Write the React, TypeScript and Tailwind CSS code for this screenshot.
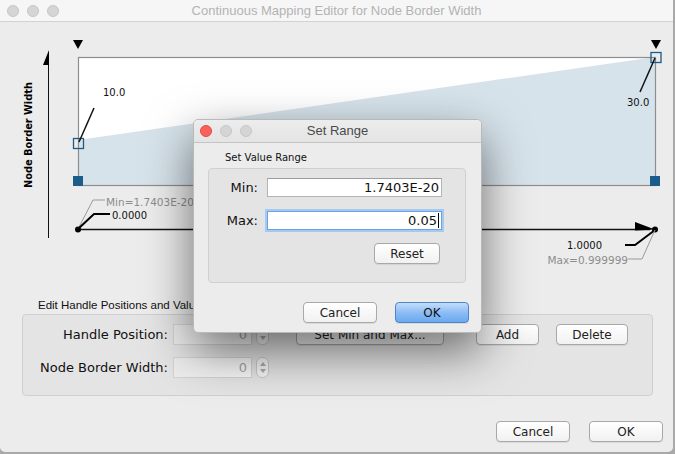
import React from "react";

const dv = "font-['DejaVu_Sans',sans-serif]";
const lib = "font-['Liberation_Sans',Arial,sans-serif]";

function Light({ color }: { color: "gray" | "red" }) {
  return color === "red" ? (
    <div className="w-[12px] h-[12px] rounded-full bg-[#fc605c] border border-[#dd4b47]" />
  ) : (
    <div className="w-[12px] h-[12px] rounded-full bg-[#d5d5d5] border border-[#c6c6c6]" />
  );
}

function Btn({
  w,
  children,
  primary,
}: {
  w: string;
  children: React.ReactNode;
  primary?: boolean;
}) {
  const base = `h-[21px] ${w} rounded-[4px] flex items-center justify-center text-[12px] ${dv}`;
  return primary ? (
    <div className={`${base} border border-[#5282c9] bg-linear-to-b from-[#c3ddfb] via-[#8dbdf4] to-[#69a9f0] text-[#111] shadow-[0_1px_0_rgba(0,0,0,0.08)]`}>
      {children}
    </div>
  ) : (
    <div className={`${base} border border-[#a8a8a8] bg-linear-to-b from-white to-[#f1f1f1] text-[#222] shadow-[0_1px_0_rgba(0,0,0,0.07)]`}>
      {children}
    </div>
  );
}

function Spinner({ up = true }: { up?: boolean }) {
  return (
    <div className="w-[13px] h-[21px] rounded-[6px] border border-[#c9c9c9] bg-[#f4f4f4] flex flex-col items-center justify-center gap-[3px]">
      {up ? (
        <svg width="6" height="4" viewBox="0 0 6 4">
          <polygon points="3,0 6,4 0,4" fill="#a9a9a9" />
        </svg>
      ) : (
        <div className="h-[4px]" />
      )}
      <svg width="6" height="4" viewBox="0 0 6 4">
        <polygon points="0,0 6,0 3,4" fill="#a9a9a9" />
      </svg>
    </div>
  );
}

function Chart() {
  const f = "DejaVu Sans, sans-serif";
  return (
    <svg width="673" height="274" viewBox="0 22 673 274" className="block shrink-0">
      {/* Y axis */}
      <line x1="48.5" y1="52" x2="48.5" y2="238" stroke="#111" strokeWidth="1" />
      <polygon points="49,50 43,65 49,65" fill="#000" />
      <text
        transform="translate(28,135) rotate(-90)"
        textAnchor="middle"
        dominantBaseline="central"
        fontFamily={f}
        fontWeight="bold"
        fontSize="9.8"
        fill="#000"
      >
        Node Border Width
      </text>

      {/* top triangles */}
      <polygon points="73,40 83,40 78,49" fill="#000" />
      <polygon points="651,40 661,40 656,49" fill="#000" />

      {/* plot area */}
      <rect x="78" y="57" width="577" height="128" fill="#fff" />
      <polygon points="78,140 655,57 655,185 78,185" fill="#d7e3eb" />
      <rect x="78.5" y="57.5" width="577" height="128" fill="none" stroke="#8d8d8d" strokeWidth="1.2" />

      {/* handles */}
      <rect x="73.5" y="138.5" width="10" height="10" fill="none" stroke="#1d5a86" strokeWidth="1.3" />
      <rect x="651" y="52.5" width="10" height="10" fill="none" stroke="#1d5a86" strokeWidth="1.3" />
      <rect x="73" y="176" width="10" height="10" fill="#1b5c8a" />
      <rect x="650" y="176" width="10" height="10" fill="#1b5c8a" />

      {/* value labels */}
      <line x1="94" y1="108" x2="79" y2="142" stroke="#111" strokeWidth="1.5" />
      <text x="103" y="95.6" fontFamily={f} fontSize="10" fill="#111">10.0</text>
      <line x1="640" y1="92" x2="655" y2="58" stroke="#111" strokeWidth="1.5" />
      <text x="627" y="105.6" fontFamily={f} fontSize="10" fill="#111">30.0</text>

      {/* X axis */}
      <line x1="78" y1="229.5" x2="650" y2="229.5" stroke="#111" strokeWidth="1.3" />
      <polygon points="635,222 655,229.5 635,230.5" fill="#000" />
      <circle cx="78" cy="229.5" r="3" fill="#000" />
      <circle cx="655" cy="229.5" r="3" fill="#000" />

      {/* left labels */}
      <polyline points="78,229 93,200 105,200" fill="none" stroke="#9a9a9a" strokeWidth="1" />
      <polyline points="78,229 94,214 110,214" fill="none" stroke="#000" strokeWidth="2" />
      <text x="106" y="205.8" fontFamily={f} fontSize="10.5" fill="#8c8c8c">Min=1.7403E-20</text>
      <text x="112" y="218.6" fontFamily={f} fontSize="10" fill="#111">0.0000</text>

      {/* right labels */}
      <polyline points="655,230 635,245 625,245" fill="none" stroke="#000" strokeWidth="2" />
      <polyline points="655,230 642,259 628,259" fill="none" stroke="#9a9a9a" strokeWidth="1" />
      <text x="602" y="248.6" textAnchor="end" fontFamily={f} fontSize="10" fill="#111">1.0000</text>
      <text x="628" y="263.8" textAnchor="end" fontFamily={f} fontSize="10.5" fill="#8c8c8c">Max=0.999999</text>
    </svg>
  );
}

function SetRangeDialog() {
  return (
    <div className="absolute left-[193px] top-[119px] w-[289px] h-[214px] rounded-[5px] bg-[#ececec] border border-[#b9b9b9] shadow-[0_18px_48px_rgba(0,0,0,0.55)] flex flex-col overflow-hidden">
      <div className="h-[23px] shrink-0 bg-linear-to-b from-[#ededed] to-[#e4e4e4] border-b border-[#c4c4c4] grid grid-cols-[1fr_auto_1fr] items-center">
        <div className="flex gap-[8px] pl-[6px]">
          <Light color="red" />
          <Light color="gray" />
          <Light color="gray" />
        </div>
        <div className={`${lib} text-[13px] text-[#4a4a4a]`}>Set Range</div>
        <div />
      </div>
      <div className={`${dv} text-[10px] text-[#111] pl-[31px] mt-[8px] h-[14px] leading-[14px]`}>Set Value Range</div>
      <div className="ml-[14px] mt-[3px] w-[258px] h-[115px] rounded-[4px] border border-[#d0d0d0] bg-[#e4e4e4] flex flex-col pt-[9px]">
        <div className="flex items-center gap-[9px]">
          <div className={`${dv} w-[49px] text-right text-[13px] text-[#111]`}>Min:</div>
          <div className={`${dv} w-[175px] h-[19px] bg-white border border-[#b4b4b4] border-t-[#9d9d9d] text-right text-[13px] leading-[17px] pr-[2px] text-[#111]`}>
            1.7403E-20
          </div>
        </div>
        <div className="flex items-center gap-[9px] mt-[13px]">
          <div className={`${dv} w-[49px] text-right text-[13px] text-[#111]`}>Max:</div>
          <div className={`${dv} w-[175px] h-[19px] bg-white border border-[#6ca2e4] shadow-[0_0_0_2px_#a6c9f2] text-right text-[13px] leading-[17px] pr-[2px] text-[#111] flex justify-end items-center`}>
            <span>0.05</span>
            <span className="w-[1px] h-[15px] bg-black ml-[1px]" />
          </div>
        </div>
        <div className="mt-[13px] ml-[165px]">
          <Btn w="w-[66px]">Reset</Btn>
        </div>
      </div>
      <div className="flex justify-end gap-[18px] pr-[12px] mt-[19px]">
        <Btn w="w-[74px]">Cancel</Btn>
        <Btn w="w-[74px]" primary>
          OK
        </Btn>
      </div>
    </div>
  );
}

export default function App() {
  return (
    <div className="w-[675px] h-[454px] bg-[#a9a9a9] overflow-hidden">
      <div className="relative w-[673px] h-[452px] bg-[#ececec] rounded-b-[5px] flex flex-col overflow-hidden">
        {/* title bar */}
        <div className="h-[22px] shrink-0 bg-[#f6f6f6] border-b border-[#d2d2d2] grid grid-cols-[1fr_auto_1fr] items-center">
          <div className="flex gap-[8px] pl-[7px]">
            <Light color="gray" />
            <Light color="gray" />
            <Light color="gray" />
          </div>
          <div className={`${lib} text-[13px] text-[#b3b3b3]`}>
            Continuous Mapping Editor for Node Border Width
          </div>
          <div />
        </div>

        <Chart />

        <div className={`${lib} text-[11.5px] text-[#111] pl-[38px] h-[18px] leading-[18px] shrink-0`}>
          Edit Handle Positions and Values
        </div>

        <div className="ml-[22px] w-[631px] h-[82px] shrink-0 rounded-[4px] border border-[#cfcfcf] bg-[#e4e4e4] flex flex-col pt-[9px]">
          <div className="flex items-center">
            <div className={`${dv} w-[145px] text-right text-[13px] text-[#111]`}>Handle Position:</div>
            <div className={`${dv} ml-[5px] w-[79px] h-[21px] bg-linear-to-r from-[#ededed] to-[#f8f8f8] border border-[#d3d3d3] text-right text-[13px] leading-[19px] pr-[4px] text-[#a3a3a3]`}>
              0
            </div>
            <div className="ml-[4px]">
              <Spinner up={false} />
            </div>
            <div className="ml-[27px]">
              <Btn w="w-[148px]">Set Min and Max...</Btn>
            </div>
            <div className="ml-[32px]">
              <Btn w="w-[63px]">Add</Btn>
            </div>
            <div className="ml-[17px]">
              <Btn w="w-[72px]">Delete</Btn>
            </div>
          </div>
          <div className="flex items-center mt-[12px]">
            <div className={`${dv} w-[145px] text-right text-[13px] text-[#111]`}>Node Border Width:</div>
            <div className={`${dv} ml-[5px] w-[79px] h-[21px] bg-linear-to-r from-[#ededed] to-[#f8f8f8] border border-[#d3d3d3] text-right text-[13px] leading-[19px] pr-[4px] text-[#a3a3a3]`}>
              0
            </div>
            <div className="ml-[4px]">
              <Spinner />
            </div>
          </div>
        </div>

        <div className="flex justify-end gap-[19px] pr-[10px] mt-[25px]">
          <Btn w="w-[74px]">Cancel</Btn>
          <Btn w="w-[74px]">OK</Btn>
        </div>

        <SetRangeDialog />
      </div>
    </div>
  );
}
